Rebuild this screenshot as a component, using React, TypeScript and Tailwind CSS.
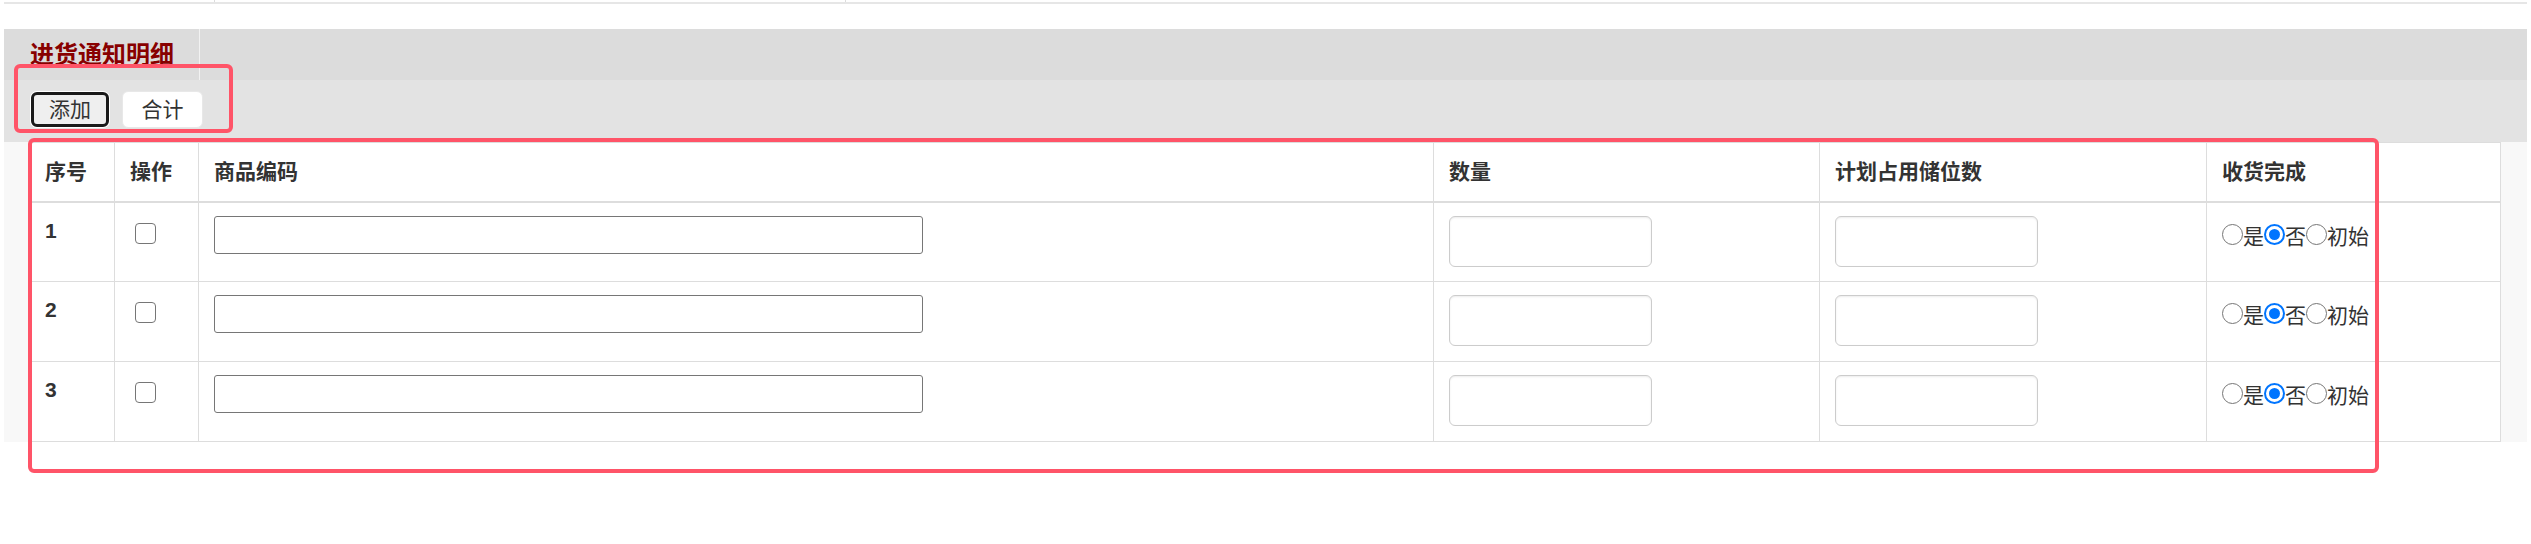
import React from "react";

const FONT = '"Liberation Sans", "Noto Sans CJK SC", sans-serif';

function Radio({ checked }: { checked?: boolean }) {
  if (checked) {
    return (
      <span className="shrink-0 mt-[2px] w-[21px] h-[21px] rounded-full border-[2px] border-[#0075ff] bg-white flex items-center justify-center">
        <span className="w-[11px] h-[11px] rounded-full bg-[#0075ff]" />
      </span>
    );
  }
  return <span className="shrink-0 mt-[2px] w-[21px] h-[21px] rounded-full border-[1.5px] border-[#767676] bg-white" />;
}

function Row({ n }: { n: number }) {
  return (
    <tr>
      <td className="border border-[#dddddd] h-[80px] align-top pt-[13px] pl-[15px] text-[21px] font-bold text-[#333333] leading-[30px]">
        {n}
      </td>
      <td className="border border-[#dddddd] align-top pt-[20px] pl-[20px]">
        <span className="block w-[21px] h-[21px] rounded-[4px] border-[1.5px] border-[#767676] bg-white" />
      </td>
      <td className="border border-[#dddddd] align-top pt-[13px] pl-[15px]">
        <input
          type="text"
          className="block w-[709px] h-[38px] border border-[#767676] rounded-[3px] bg-white"
        />
      </td>
      <td className="border border-[#dddddd] align-top pt-[13px] pl-[15px]">
        <input
          type="text"
          className="block w-[203px] h-[51px] border border-[#cccccc] rounded-[6px] bg-white shadow-[inset_0_1px_2px_rgba(0,0,0,0.08)]"
        />
      </td>
      <td className="border border-[#dddddd] align-top pt-[13px] pl-[15px]">
        <input
          type="text"
          className="block w-[203px] h-[51px] border border-[#cccccc] rounded-[6px] bg-white shadow-[inset_0_1px_2px_rgba(0,0,0,0.08)]"
        />
      </td>
      <td className="border border-[#dddddd] align-top pt-[19px] pl-[15px]">
        <div className="flex items-start text-[21px] text-[#333333] leading-[30px]">
          <Radio />
          <span>是</span>
          <Radio checked />
          <span>否</span>
          <Radio />
          <span>初始</span>
        </div>
      </td>
    </tr>
  );
}

export default function App() {
  return (
    <div className="relative w-[2531px] h-[544px] bg-white overflow-hidden" style={{ fontFamily: FONT }}>
      {/* top remnant line */}
      <div className="mx-[4px] h-[4px] border-b-2 border-[#e6e6e6] flex">
        <div className="w-[211px] border-r border-[#dcdcdc]" />
        <div className="w-[631px] border-r border-[#dcdcdc]" />
      </div>

      <div className="mx-[4px] mt-[25px]">
        {/* title band */}
        <div className="h-[51px] bg-[#dcdcdc] flex">
          <div className="w-[196px] border-r border-[#f2f2f2] pl-[26px] flex items-center">
            <span className="text-[24px] font-bold text-[#880000] leading-none">进货通知明细</span>
          </div>
        </div>
        {/* button band */}
        <div className="h-[62px] bg-[#e3e3e3] flex items-start pt-[11px] pl-[26px] gap-[12px]">
          <button className="w-[80px] h-[37px] rounded-[7px] bg-white p-[1px]">
            <span className="flex items-center justify-center w-full h-full rounded-[6px] border-[3px] border-[#1a1a1a] bg-[#efefef] text-[21px] text-[#333333]">
              添加
            </span>
          </button>
          <button className="w-[81px] h-[37px] rounded-[6px] bg-white border border-[#e8e8e8] flex items-center justify-center text-[21px] text-[#333333]">
            合计
          </button>
        </div>
        {/* table area */}
        <div className="bg-[#f8f8f8] pl-[25px] pr-[26px]">
          <table className="table-fixed w-[2471px] border-collapse bg-white">
            <colgroup>
              <col className="w-[85px]" />
              <col className="w-[84px]" />
              <col className="w-[1235px]" />
              <col className="w-[386px]" />
              <col className="w-[387px]" />
              <col className="w-[294px]" />
            </colgroup>
            <thead>
              <tr>
                {["序号", "操作", "商品编码", "数量", "计划占用储位数", "收货完成"].map((h) => (
                  <th
                    key={h}
                    className="border border-[#dddddd] border-b-2 h-[59px] pl-[15px] text-left align-middle text-[21px] font-bold text-[#333333]"
                  >
                    {h}
                  </th>
                ))}
              </tr>
            </thead>
            <tbody>
              <Row n={1} />
              <Row n={2} />
              <Row n={3} />
            </tbody>
          </table>
        </div>
      </div>

      {/* red annotation boxes */}
      <div className="absolute left-[14px] top-[64px] w-[219px] h-[69px] border-4 border-[#ff5468] rounded-[6px] pointer-events-none" />
      <div className="absolute left-[28px] top-[138px] w-[2351px] h-[335px] border-4 border-[#ff5468] rounded-[6px] pointer-events-none" />
    </div>
  );
}
